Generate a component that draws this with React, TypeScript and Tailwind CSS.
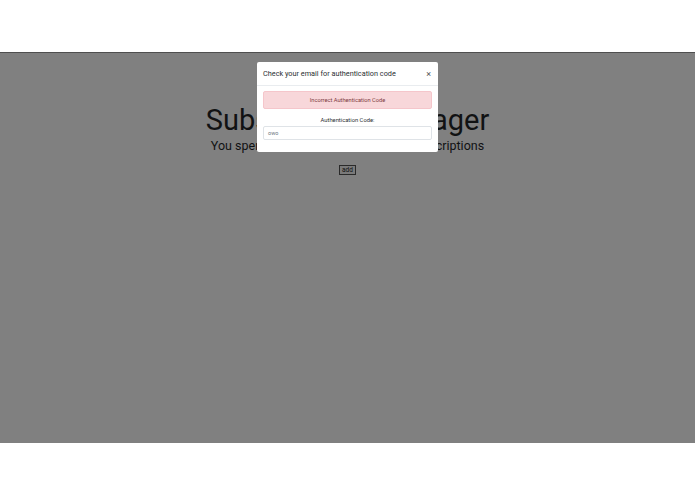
import React from "react";

export default function App() {
  const font = { fontFamily: "Roboto, 'Liberation Sans', sans-serif" };
  return (
    <div className="w-[695px] h-[494px] bg-white relative overflow-hidden" style={font}>
      <div className="h-[52px] bg-white" />
      <div className="h-[391px] bg-[#808080] border-t border-[#4f4f4f] flex flex-col items-center">
        <h1 className="mt-[50px] text-[29px] leading-[35px] text-[#111213] font-normal">Subscription Manager</h1>
        <p className="mt-[1px] text-[12.5px] leading-[13px] text-[#111213]">You spend $0.00 each month on all subscriptions</p>
        <button className="mt-[13px] h-[10px] px-[2px] border border-[#2a2a2a] bg-[#7a7a7a] text-[6.5px] leading-[8px] text-[#111]">add</button>
      </div>
      <div className="absolute left-[257px] top-[62px] w-[181px] h-[90px] bg-white rounded-[2px] flex flex-col">
        <div className="h-[24px] border-b border-[#e9ecef] pl-[6px] pr-[7px] pt-[1px] flex items-center justify-between">
          <span className="text-[7.3px] text-[#2b2f33]">Check your email for authentication code</span>
          <span className="text-[9px] text-[#555] leading-none">×</span>
        </div>
        <div className="px-[6px] pt-[5px] flex flex-col">
          <div className="h-[18px] bg-[#f8d7da] border border-[#f5c6cb] rounded-[2px] flex items-center justify-center text-[5.7px] text-[#7d3a40]">
            Incorrect Authentication Code
          </div>
          <div className="mt-[7px] text-center text-[5.8px] leading-[8px] text-[#2b2f33]">Authentication Code:</div>
          <div className="mt-[2px] h-[14px] border border-[#dfe3e7] rounded-[2px] flex items-center px-[4px] text-[5.5px] text-[#6c757d]">owo</div>
        </div>
      </div>
    </div>
  );
}
